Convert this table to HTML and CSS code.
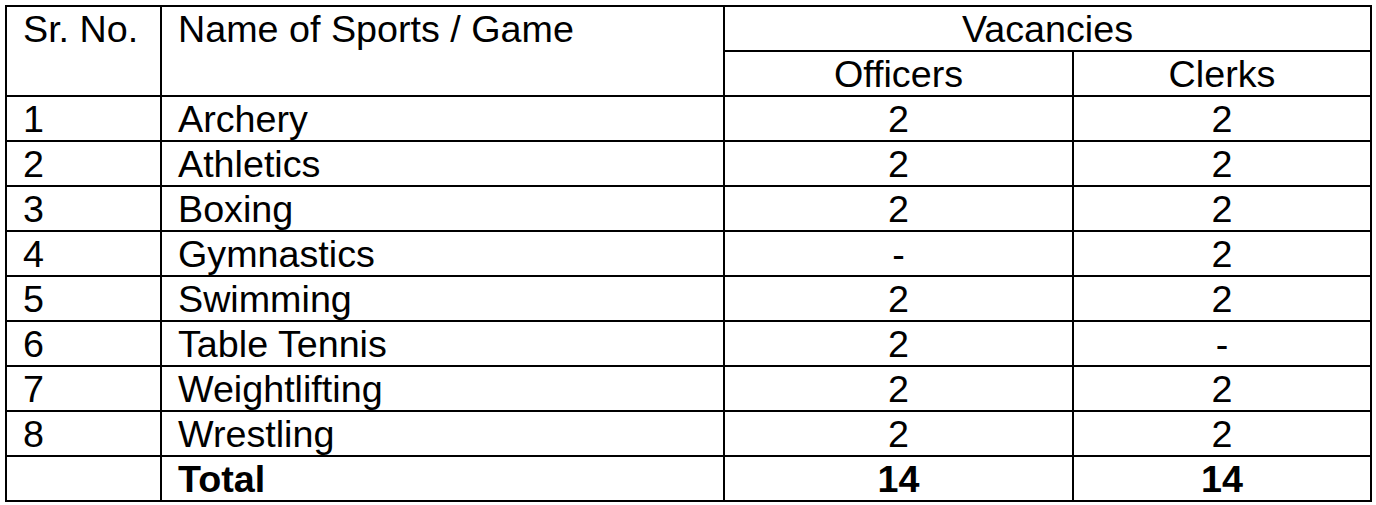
FILE: index.html
```html
<!DOCTYPE html>
<html>
<head>
<meta charset="utf-8">
<link rel="stylesheet" href="styles.css">
</head>
<body>
<table class="vac">
  <colgroup>
    <col class="c-sr">
    <col class="c-name">
    <col class="c-off">
    <col class="c-clk">
  </colgroup>
  <tr>
    <td rowspan="2" class="left">Sr. No.</td>
    <td rowspan="2" class="left">Name of Sports / Game</td>
    <td colspan="2" class="mid">Vacancies</td>
  </tr>
  <tr><td class="mid">Officers</td><td class="mid">Clerks</td></tr>
  <tr><td class="left">1</td><td class="left">Archery</td><td class="mid">2</td><td class="mid">2</td></tr>
  <tr><td class="left">2</td><td class="left">Athletics</td><td class="mid">2</td><td class="mid">2</td></tr>
  <tr><td class="left">3</td><td class="left">Boxing</td><td class="mid">2</td><td class="mid">2</td></tr>
  <tr><td class="left">4</td><td class="left">Gymnastics</td><td class="mid">-</td><td class="mid">2</td></tr>
  <tr><td class="left">5</td><td class="left">Swimming</td><td class="mid">2</td><td class="mid">2</td></tr>
  <tr><td class="left">6</td><td class="left">Table Tennis</td><td class="mid">2</td><td class="mid">-</td></tr>
  <tr><td class="left">7</td><td class="left">Weightlifting</td><td class="mid">2</td><td class="mid">2</td></tr>
  <tr><td class="left">8</td><td class="left">Wrestling</td><td class="mid">2</td><td class="mid">2</td></tr>
  <tr class="total"><td class="left"></td><td class="left">Total</td><td class="mid">14</td><td class="mid">14</td></tr>
</table>
</body>
</html>
```

FILE: styles.css
```css
html, body {
  margin: 0;
  padding: 0;
  background: #fff;
}
body {
  padding: 5px 0 0 5px;
  font-family: "Liberation Sans", Arial, sans-serif;
  color: #000;
}
.vac {
  border-collapse: collapse;
  table-layout: fixed;
  width: 1365px;
  font-size: 37.7px;
}
.c-sr { width: 155px; }
.c-name { width: 563px; }
.c-off { width: 349px; }
.c-clk { width: 298px; }
.vac td {
  border: 2px solid #000;
  padding: 1px 0 0 0;
  height: 42px;
  line-height: 42px;
  vertical-align: top;
  white-space: nowrap;
}
.vac td.left { padding-left: 16px; text-align: left; }
.vac td.mid { text-align: center; }
.total td { font-weight: bold; }
```
